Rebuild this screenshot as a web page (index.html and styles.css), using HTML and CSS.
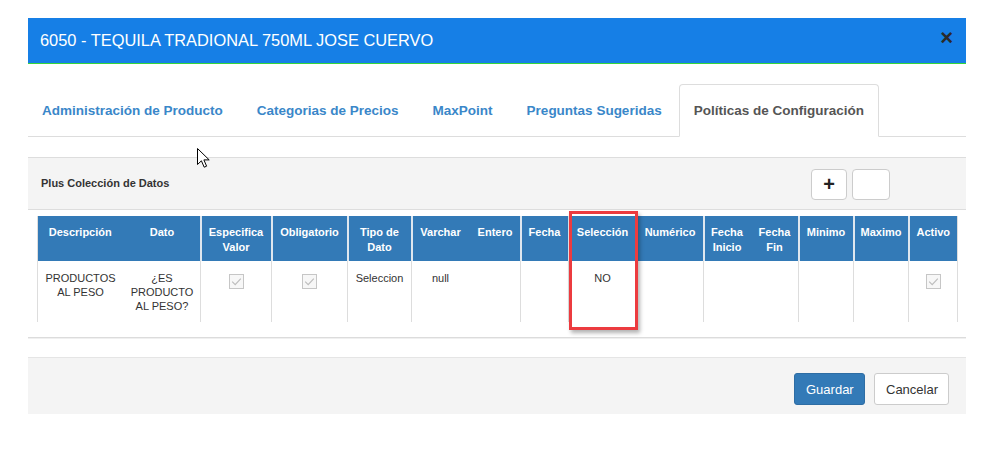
FILE: index.html
```html
<!DOCTYPE html>
<html lang="es">
<head>
<meta charset="utf-8">
<title>6050 - TEQUILA TRADIONAL 750ML JOSE CUERVO</title>
<link rel="stylesheet" href="styles.css">
</head>
<body>
<div class="modal">
  <div class="modal-header">
    <h4 class="modal-title">6050 - TEQUILA TRADIONAL 750ML JOSE CUERVO</h4>
    <span class="close">×</span>
  </div>
  <ul class="nav-tabs">
    <li class="tab">Administración de Producto</li>
    <li class="tab">Categorias de Precios</li>
    <li class="tab">MaxPoint</li>
    <li class="tab">Preguntas Sugeridas</li>
    <li class="tab active">Políticas de Configuración</li>
  </ul>
  <div class="panel">
    <span class="panel-title">Plus Colección de Datos</span>
    <div class="panel-tools">
      <button class="btn-tool">+</button>
      <button class="btn-tool wide"></button>
    </div>
  </div>
  <div class="table-wrap">
    <table class="grid">
      <colgroup>
        <col style="width:86px"><col style="width:77px"><col style="width:71px"><col style="width:76px"><col style="width:64px"><col style="width:58px"><col style="width:51px"><col style="width:48px"><col style="width:68px"><col style="width:67px"><col style="width:47px"><col style="width:48px"><col style="width:55px"><col style="width:55px"><col style="width:49px">
      </colgroup>
      <thead>
        <tr>
          <th class="first">Descripción</th>
          <th class="nb">Dato</th>
          <th>Especifica<br>Valor</th>
          <th>Obligatorio</th>
          <th>Tipo de<br>Dato</th>
          <th>Varchar</th>
          <th class="nb">Entero</th>
          <th>Fecha</th>
          <th>Selección</th>
          <th>Numérico</th>
          <th>Fecha<br>Inicio</th>
          <th class="nb">Fecha<br>Fin</th>
          <th>Minimo</th>
          <th>Maximo</th>
          <th class="last">Activo</th>
        </tr>
      </thead>
      <tbody>
        <tr>
          <td class="first">PRODUCTOS<br>AL PESO</td>
          <td class="nb">¿ES<br>PRODUCTO<br>AL PESO?</td>
          <td><span class="chk"><svg width="15" height="15" viewBox="0 0 15 15"><rect x="0.5" y="0.5" width="14" height="14" fill="#f7f7f7" stroke="#c6c6c6"/><path d="M3.2 7.6 L6.2 10.6 L11.8 4.6" fill="none" stroke="#bdbdbd" stroke-width="1.2"/></svg></span></td>
          <td><span class="chk"><svg width="15" height="15" viewBox="0 0 15 15"><rect x="0.5" y="0.5" width="14" height="14" fill="#f7f7f7" stroke="#c6c6c6"/><path d="M3.2 7.6 L6.2 10.6 L11.8 4.6" fill="none" stroke="#bdbdbd" stroke-width="1.2"/></svg></span></td>
          <td>Seleccion</td>
          <td>null</td>
          <td class="nb"></td>
          <td></td>
          <td>NO</td>
          <td></td>
          <td></td>
          <td class="nb"></td>
          <td></td>
          <td></td>
          <td class="last"><span class="chk"><svg width="15" height="15" viewBox="0 0 15 15"><rect x="0.5" y="0.5" width="14" height="14" fill="#f7f7f7" stroke="#c6c6c6"/><path d="M3.2 7.6 L6.2 10.6 L11.8 4.6" fill="none" stroke="#bdbdbd" stroke-width="1.2"/></svg></span></td>
        </tr>
      </tbody>
    </table>
    <div class="highlight"></div>
  </div>
  <div class="divider"></div>
  <div class="modal-footer">
    <button class="btn primary">Guardar</button>
    <button class="btn default">Cancelar</button>
  </div>
</div>
<svg class="cursor" width="14" height="21" viewBox="0 0 14 21"><path d="M0.5 0.5 L0.5 16.5 L4.4 12.8 L7.2 19.2 L9.6 18.2 L6.9 11.9 L12.2 11.9 Z" fill="#fff" stroke="#000" stroke-width="1" stroke-linejoin="round"/></svg>
</body>
</html>
```

FILE: styles.css
```css
* { box-sizing: border-box; }
html, body { margin: 0; padding: 0; background: #fff; }
body {
  font-family: "Liberation Sans", Arial, sans-serif;
  color: #333;
  position: relative;
  height: 449px;
  overflow: hidden;
}
.modal {
  margin: 18px 0 0 28px;
  width: 938px;
}
.modal-header {
  height: 46px;
  background: #167fe6;
  border-bottom: 1px solid #35d63a;
  display: flex;
  align-items: center;
  justify-content: space-between;
  padding: 0 13px 0 12px;
}
.modal-title {
  margin: 0;
  font-size: 16.4px;
  font-weight: normal;
  color: #fff;
}
.close {
  font-size: 22px;
  font-weight: bold;
  color: #2a2a2a;
  line-height: 1;
  margin-top: -6px;
}
.nav-tabs {
  list-style: none;
  margin: 0;
  padding: 20px 0 0 0;
  display: flex;
  gap: 6px;
  border-bottom: 1px solid #ddd;
}
.tab {
  height: 53px;
  margin-bottom: -1px;
  padding: 0 13px;
  display: flex;
  align-items: center;
  font-size: 13.5px;
  font-weight: bold;
  color: #3a87c9;
  border: 1px solid transparent;
  border-radius: 4px 4px 0 0;
}
.tab.active {
  color: #555;
  background: #fff;
  border-color: #ddd;
  border-bottom-color: #fff;
  padding: 0 14px 0 14px;
  margin-left: -3px;
}
.panel {
  margin-top: 20px;
  height: 53px;
  background: #f4f4f4;
  border-top: 1px solid #ddd;
  border-bottom: 1px solid #ddd;
  display: flex;
  align-items: center;
  justify-content: space-between;
  padding: 0 76px 0 13px;
}
.panel-title {
  font-size: 11px;
  font-weight: bold;
  color: #333;
  margin-top: -2px;
}
.panel-tools {
  display: flex;
  gap: 5px;
  margin-top: 1px;
}
.btn-tool {
  width: 36px;
  height: 31px;
  background: #fff;
  border: 1px solid #ccc;
  border-radius: 4px;
  font-family: "Liberation Sans", Arial, sans-serif;
  font-size: 20px;
  font-weight: bold;
  color: #222;
  line-height: 1;
  padding: 0;
}
.btn-tool.wide { width: 38px; }
.table-wrap {
  position: relative;
  margin: 6px 0 0 9px;
  width: 920px;
}
.grid {
  border-collapse: collapse;
  table-layout: fixed;
  width: 920px;
}
.grid th {
  background: #337ab7;
  color: #fff;
  font-size: 11px;
  font-weight: bold;
  line-height: 15px;
  height: 45px;
  vertical-align: top;
  text-align: center;
  padding: 9px 0 0;
  border-left: 2px solid #dfe7ef;
}
.grid td {
  font-size: 11px;
  line-height: 14px;
  height: 61px;
  vertical-align: top;
  text-align: center;
  padding: 10px 0 0;
  color: #333;
  border-left: 1px solid #ddd;
}
.grid th.nb, .grid td.nb { border-left-color: transparent; }
.grid th.nb { border-left-color: #337ab7; }
.grid th.first, .grid td.first { border-left: 1px solid #ddd; }
.grid th.last, .grid td.last { border-right: 1px solid #ddd; }
.chk {
  display: inline-block;
  width: 15px;
  height: 15px;
  margin-top: 3px;
}
.chk svg { display: block; }
.highlight {
  position: absolute;
  left: 532px;
  top: -5px;
  width: 69px;
  height: 119px;
  border: 3px solid #ec3b3f;
  box-shadow: 2px 3px 4px rgba(0, 0, 0, 0.3);
}
.divider {
  margin-top: 15px;
  height: 2px;
  border-top: 1px solid #dcdcdc;
  background: #f0f0f0;
}
.modal-footer {
  margin-top: 18px;
  height: 57px;
  background: #f4f4f4;
  border-top: 1px solid #e5e5e5;
  display: flex;
  justify-content: flex-end;
  align-items: flex-start;
  gap: 9px;
  padding: 15px 17px 0 0;
}
.btn {
  height: 32px;
  padding: 0 11px;
  font-family: "Liberation Sans", Arial, sans-serif;
  font-size: 13px;
  border-radius: 3px;
  border: 1px solid #ccc;
}
.btn.primary {
  background: #337ab7;
  border-color: #2e6da4;
  color: #fff;
  width: 71px;
}
.btn.default {
  background: #fff;
  color: #333;
  width: 75px;
}
.cursor {
  position: absolute;
  left: 197px;
  top: 148px;
}
```
